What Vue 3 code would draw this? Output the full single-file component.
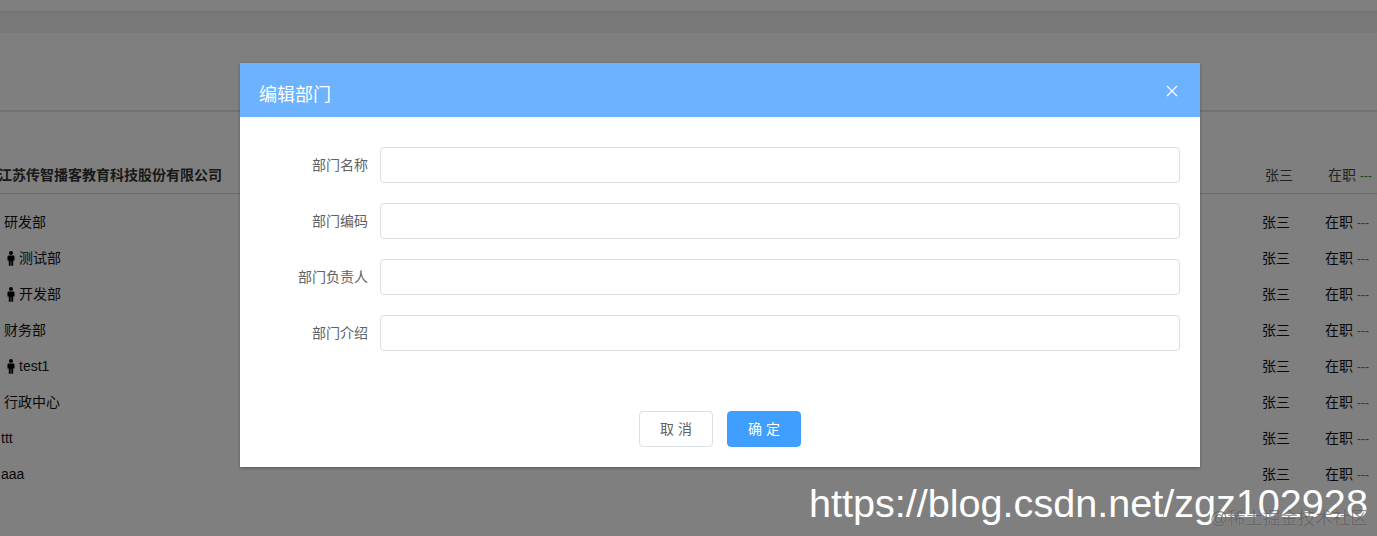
<script setup>
const departments = [
  { name: "研发部", kind: "dept" },
  { name: "测试部", kind: "staff" },
  { name: "开发部", kind: "staff" },
  { name: "财务部", kind: "dept" },
  { name: "test1", kind: "staff" },
  { name: "行政中心", kind: "dept" },
  { name: "ttt", kind: "leaf" },
  { name: "aaa", kind: "leaf" },
];

const fields = ["部门名称", "部门编码", "部门负责人", "部门介绍"];
</script>

<template>
  <div class="page">
    <div class="topbar"></div>
    <div class="tabs"></div>
    <div class="toolbar"></div>

    <div class="tree-head">
      <span class="company">江苏传智播客教育科技股份有限公司</span>
      <span class="manager">张三</span>
      <span class="status">在职</span>
      <span class="more">---</span>
    </div>

    <div class="tree">
      <div v-for="dept in departments" :key="dept.name" class="tree-row" :class="dept.kind">
        <svg v-if="dept.kind === 'staff'" class="person" viewBox="0 0 10 15" width="10" height="15">
          <circle cx="5" cy="2" r="2" fill="#000" />
          <path d="M1.5 5.2 Q1.5 4.4 2.5 4.4 H7.5 Q8.5 4.4 8.5 5.2 V9.5 H7.2 V14.8 H5.3 V10 H4.7 V14.8 H2.8 V9.5 H1.5 Z" fill="#000" />
        </svg>
        <span class="dept-name">{{ dept.name }}</span>
        <span class="manager">张三</span>
        <span class="status">在职</span>
        <span class="more">---</span>
      </div>
    </div>

    <div class="overlay">
      <div class="dialog">
        <div class="dialog-header">
          <span class="dialog-title">编辑部门</span>
          <svg class="close" viewBox="0 0 12 12" width="12" height="12">
            <path d="M1 1 L11 11 M11 1 L1 11" stroke="#fff" stroke-width="1.3" fill="none" />
          </svg>
        </div>
        <div class="dialog-body">
          <div v-for="field in fields" :key="field" class="form-item">
            <label>{{ field }}</label>
            <input type="text" />
          </div>
        </div>
        <div class="dialog-footer">
          <button class="btn">取 消</button>
          <button class="btn btn-primary">确 定</button>
        </div>
      </div>
    </div>

    <div class="watermark">https://blog.csdn.net/zgz102928</div>
    <div class="juejin">@稀土掘金技术社区</div>
  </div>
</template>

<style>
html,
body {
  margin: 0;
  overflow: hidden;
}
</style>

<style scoped>
.page {
  position: relative;
  width: 1377px;
  height: 536px;
  overflow: hidden;
  background: #fff;
  color: #111;
  font-family: "Liberation Sans", "Noto Sans CJK SC", sans-serif;
  font-size: 14px;
}
.topbar {
  height: 11px;
  border-bottom: 2px solid #e8e8e8;
}
.tabs {
  height: 20px;
  background: #f0f1f2;
}
.toolbar {
  height: 77px;
  border-bottom: 2px solid #e4e4e4;
}
.tree-head {
  display: flex;
  align-items: flex-end;
  height: 82px;
  box-sizing: border-box;
  padding-bottom: 8px;
  line-height: 20px;
  border-bottom: 1px solid #d8d8d8;
}
.company {
  flex: 1;
  margin-left: -2px;
  font-weight: 700;
  color: #333;
}
.tree-head .manager,
.tree-head .status {
  color: #444;
}
.tree-head .more {
  width: 17px;
}
.tree {
  padding-top: 10px;
}
.tree-row {
  display: flex;
  align-items: center;
  height: 36px;
  line-height: 20px;
}
.dept-name {
  flex: 1;
}
.tree-row.dept .dept-name {
  margin-left: 4px;
}
.tree-row.leaf .dept-name {
  margin-left: 1px;
}
.person {
  margin-left: 6px;
  margin-right: 3px;
}
.manager {
  width: 63px;
}
.status {
  width: 32px;
}
.more {
  width: 20px;
  color: #2e8b57;
  font-size: 12px;
  white-space: nowrap;
  position: relative;
  top: 1px;
}
.overlay {
  position: absolute;
  inset: 0;
  background: rgba(0, 0, 0, 0.5);
  padding: 63px 0 0 240px;
}
.dialog {
  width: 960px;
  height: 404px;
  background: #fff;
  box-shadow: 0 1px 3px rgba(0, 0, 0, 0.3);
  display: flex;
  flex-direction: column;
}
.dialog-header {
  height: 54px;
  background: #6cb2ff;
  display: flex;
  align-items: center;
  justify-content: space-between;
  padding: 0 22px 0 19px;
  flex-shrink: 0;
}
.dialog-title {
  color: #fff;
  font-size: 18px;
  line-height: 24px;
  margin-top: 10px;
}
.close {
  margin-top: 2px;
}
.dialog-body {
  padding: 30px 20px 0 0;
  flex: 1;
}
.form-item {
  display: flex;
  align-items: center;
  gap: 12px;
  margin-bottom: 20px;
}
.form-item label {
  width: 128px;
  text-align: right;
  color: #606266;
  font-size: 14px;
  line-height: 20px;
  margin-top: -1px;
  flex-shrink: 0;
}
.form-item input {
  flex: 1;
  height: 36px;
  box-sizing: border-box;
  border: 1px solid #dcdfe6;
  border-radius: 4px;
  background: #fff;
  outline: none;
}
.dialog-footer {
  display: flex;
  justify-content: center;
  gap: 14px;
  padding-bottom: 20px;
}
.btn {
  width: 74px;
  height: 36px;
  box-sizing: border-box;
  border: 1px solid #dcdfe6;
  border-radius: 4px;
  background: #fff;
  color: #606266;
  font-family: inherit;
  font-size: 14px;
  line-height: 20px;
  padding: 0;
}
.btn-primary {
  background: #409eff;
  border-color: #409eff;
  color: #fff;
}
.watermark {
  position: absolute;
  left: 809px;
  top: 477px;
  color: #fff;
  font-size: 39.6px;
  line-height: 52px;
  white-space: nowrap;
}
.juejin {
  position: absolute;
  left: 1210px;
  top: 507px;
  color: rgba(70, 70, 70, 0.6);
  text-shadow: 0 0 1px rgba(255, 255, 255, 0.25);
  font-size: 17.5px;
  line-height: 22px;
  white-space: nowrap;
}
</style>
